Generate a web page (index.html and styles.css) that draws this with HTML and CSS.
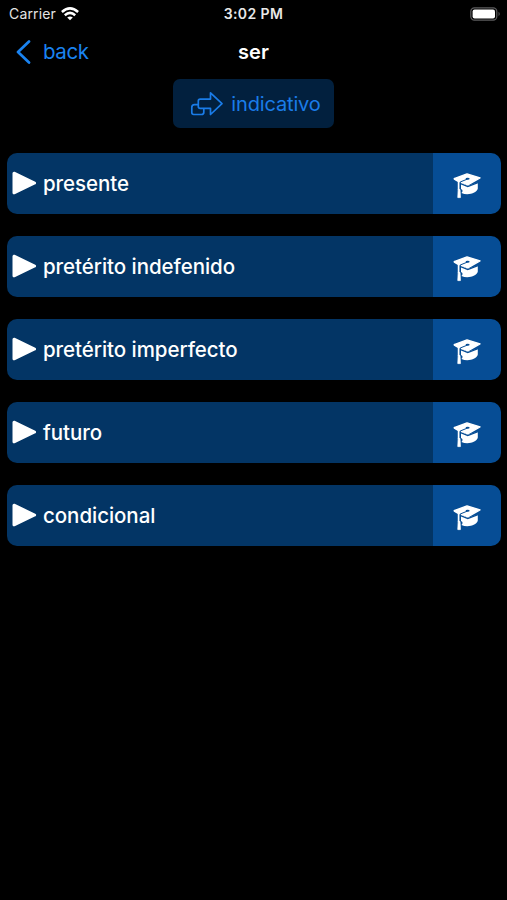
FILE: index.html
```html
<!DOCTYPE html>
<html lang="es">
<head>
    <meta charset="UTF-8">
    <meta name="viewport" content="width=device-width, initial-scale=1.0">
    <title>ser</title>
    <link rel="stylesheet" href="styles.css">
</head>
<body>

    <!-- shared icons -->
    <svg class="icon-defs" width="0" height="0">
        <symbol id="play" viewBox="0 0 25 24">
            <path d="M2 2.2 L22.6 12 L2 21.8 Z" fill="#fff" stroke="#fff" stroke-width="3" stroke-linejoin="round"/>
        </symbol>
        <symbol id="cap" viewBox="0 0 28 26">
            <path d="M8 9.5 L14.8 13 L24.8 9.4 V15.5 C24 20 15 23 8.4 20 C10 18.6 10 17 8 16 Z" fill="#fff"/>
            <path d="M7.6 10.6 L14.8 13.6 L25.6 9.4" fill="none" stroke="#064d95" stroke-width="1.3"/>
            <path d="M1.2 5.6 L14 .9 L27 4.8 L14.8 11.8 L8 9 Z" fill="#fff" stroke="#fff" stroke-width="1.4" stroke-linejoin="round"/>
            <path d="M1.2 5.6 L6.6 9" stroke="#fff" stroke-width="2" fill="none"/>
            <path d="M14.6 6 L7.2 9 V14" fill="none" stroke="#064d95" stroke-width="1"/>
            <ellipse cx="14.6" cy="5.8" rx="2" ry="1" fill="#064d95"/>
            <path d="M5.6 8.8 V17" stroke="#fff" stroke-width="1.7"/>
            <path d="M5.2 16.5 L4.8 24.6 H7.4 L7 16.5 Z" fill="#fff" stroke="#fff" stroke-width=".8" stroke-linejoin="round"/>
        </symbol>
    </svg>

    <!-- status bar -->
    <div class="status-bar">
        <div class="carrier">
            <span>Carrier</span>
            <svg class="wifi" width="18" height="14" viewBox="0 0 18 14" fill="none" stroke="#fff" stroke-width="2.5">
                <path d="M.9 5 Q9 -2.2 17.1 5"/>
                <path d="M3.8 8.2 Q9 3.6 14.2 8.2"/>
                <path d="M9 13.3 L6.2 10.6 Q9 8.4 11.8 10.6 Z" fill="#fff" stroke="none"/>
            </svg>
        </div>
        <div class="time">3:02 PM</div>
        <svg class="battery" width="31" height="14" viewBox="0 0 31 14">
            <rect x=".8" y=".8" width="26" height="12.4" rx="3.6" fill="none" stroke="#5c5c5e" stroke-width="1.2"/>
            <rect x="2.6" y="2.5" width="22.4" height="9" rx="2" fill="#fff"/>
            <path d="M28.6 4.8 Q30.6 7 28.6 9.2 Z" fill="#6c6c6e"/>
        </svg>
    </div>

    <!-- navigation -->
    <div class="nav-bar">
        <a class="back" href="#">
            <svg width="15" height="24" viewBox="0 0 15 24">
                <path d="M13 1.5 L2 12 L13 22.5" fill="none" stroke="#1a83f0" stroke-width="2.7" stroke-linecap="round" stroke-linejoin="round"/>
            </svg>
            <span>back</span>
        </a>
        <h1>ser</h1>
    </div>

    <!-- mood -->
    <button class="mood">
        <svg width="34" height="26" viewBox="0 0 34 26" fill="none" stroke="#1a7ce8" stroke-width="1.7" stroke-linejoin="round">
            <path d="M20.5 1.8 L32 12.7 L20.5 23.5 V17.4 H10.2 Q8.3 17.4 8.3 15.5 V10 Q8.3 8.1 10.2 8.1 H20.5 Z"/>
            <path d="M8.3 13.6 H4.5 Q1.8 13.6 1.8 16.2 V21.6 Q1.8 23.5 3.7 23.5 H11.5 Q13.8 23.5 13.8 21.2 V17.6"/>
        </svg>
        <span>indicativo</span>
    </button>

    <!-- tenses -->
    <div class="tenses">
        <div class="tense">
            <button class="open"><svg width="25" height="24"><use href="#play"/></svg><span>presente</span></button>
            <button class="learn"><svg width="28" height="26"><use href="#cap"/></svg></button>
        </div>
        <div class="tense">
            <button class="open"><svg width="25" height="24"><use href="#play"/></svg><span>pretérito indefenido</span></button>
            <button class="learn"><svg width="28" height="26"><use href="#cap"/></svg></button>
        </div>
        <div class="tense">
            <button class="open"><svg width="25" height="24"><use href="#play"/></svg><span>pretérito imperfecto</span></button>
            <button class="learn"><svg width="28" height="26"><use href="#cap"/></svg></button>
        </div>
        <div class="tense">
            <button class="open"><svg width="25" height="24"><use href="#play"/></svg><span>futuro</span></button>
            <button class="learn"><svg width="28" height="26"><use href="#cap"/></svg></button>
        </div>
        <div class="tense">
            <button class="open"><svg width="25" height="24"><use href="#play"/></svg><span>condicional</span></button>
            <button class="learn"><svg width="28" height="26"><use href="#cap"/></svg></button>
        </div>
    </div>

</body>
</html>
```

FILE: styles.css
```css
body {
    margin: 0;
    padding: 0;
    height: 900px;
    overflow: hidden;
    font-family: Inter, "Liberation Sans", sans-serif;
    background-color: #000000;
    color: #ffffff;
}

svg {
    display: block;
    flex: none;
}

button {
    margin: 0;
    border: none;
    font-family: inherit;
    color: inherit;
    cursor: pointer;
}

.icon-defs {
    height: 0;
}

.status-bar {
    display: grid;
    grid-template-columns: 1fr auto 1fr;
    align-items: center;
    height: 27px;
    padding: 0 6px 0 9px;
}

.carrier {
    display: flex;
    align-items: center;
    gap: 5px;
    font-size: 14px;
    letter-spacing: 0.15px;
    color: #e4e4e4;
}

.time {
    margin-right: 3px;
    font-size: 14px;
    font-weight: 600;
    letter-spacing: 0.4px;
    color: #e8e8e8;
}

.battery {
    justify-self: end;
}

.nav-bar {
    display: grid;
    grid-template-columns: 1fr auto 1fr;
    align-items: center;
    height: 49px;
    padding: 0 16px;
}

.nav-bar h1 {
    margin: 0;
    font-size: 20px;
    font-weight: 600;
}

.back {
    display: flex;
    align-items: center;
    gap: 12px;
    font-size: 20.5px;
    letter-spacing: -0.4px;
    color: #1a83f0;
    text-decoration: none;
}

.mood {
    display: flex;
    align-items: center;
    justify-content: center;
    gap: 7px;
    width: 161px;
    height: 49px;
    margin: 3px auto 0 173px;
    padding: 0 0 0 4px;
    border-radius: 7px;
    background-color: #02203e;
    color: #1a7ce8;
    font-size: 20px;
    letter-spacing: -0.15px;
}

.tenses {
    display: flex;
    flex-direction: column;
    gap: 22px;
    padding: 24.5px 6.5px 0 7px;
}

.tense {
    display: flex;
    height: 61px;
    border-radius: 10px;
    overflow: hidden;
}

.open {
    flex: 1;
    display: flex;
    align-items: center;
    gap: 6px;
    padding: 0 5px;
    background-color: #033565;
    font-size: 20.5px;
    font-weight: 500;
    letter-spacing: -0.05px;
}

.learn {
    display: flex;
    align-items: center;
    justify-content: center;
    width: 67.5px;
    padding: 5px 0 0;
    background-color: #064d95;
}
```
